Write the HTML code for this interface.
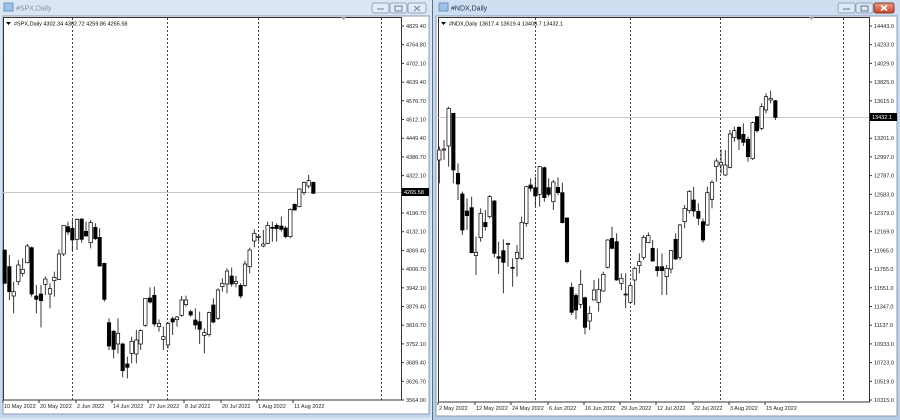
<!DOCTYPE html>
<html><head><meta charset="utf-8"><style>
body{margin:0;width:900px;height:420px;overflow:hidden;background:#dfe9f5;font-family:"Liberation Sans",sans-serif}
svg{display:block}
</style></head><body>
<svg width="900" height="420" viewBox="0 0 900 420" xmlns="http://www.w3.org/2000/svg" font-family="Liberation Sans, sans-serif">
<defs>
<linearGradient id="tb" x1="0" y1="0" x2="0" y2="1"><stop offset="0" stop-color="#dbe6f4"/><stop offset="1" stop-color="#c6d7ec"/></linearGradient>
<linearGradient id="tb2" x1="0" y1="0" x2="0" y2="1"><stop offset="0" stop-color="#cfdff2"/><stop offset="1" stop-color="#b7cde8"/></linearGradient>
<linearGradient id="rb" x1="0" y1="0" x2="0" y2="1"><stop offset="0" stop-color="#e8a08e"/><stop offset="1" stop-color="#c7442d"/></linearGradient>
</defs>
<rect x="0" y="0" width="431" height="418" fill="url(#tb)"/>
<rect x="3" y="16" width="426" height="398" fill="#fff" stroke="#8a9bb0" stroke-width="1"/>
<rect x="4" y="3" width="9" height="8" fill="#9fc1e6" stroke="#6c94c4"/>
<text x="16" y="10.5" font-size="7" fill="#7f93ad">#SPX,Daily</text>
<g fill="#e3ebf5" stroke="#8fa6c2"><rect x="372" y="3" width="17" height="10" rx="2"/><rect x="390" y="3" width="17" height="10" rx="2"/><rect x="408" y="3" width="18" height="10" rx="2"/></g>
<g stroke="#6b7f99" fill="none"><line x1="377" y1="9" x2="384" y2="9"/><rect x="395" y="6" width="7" height="5"/><path d="M414 6l6 5M420 6l-6 5"/></g>
<rect x="433" y="0" width="467" height="420" fill="url(#tb2)"/>
<line x1="432.5" y1="0" x2="432.5" y2="420" stroke="#5f6f80"/>
<rect x="436" y="16" width="461" height="400" fill="#fff" stroke="#8a9bb0"/>
<rect x="439" y="3" width="9" height="8" fill="#9fc1e6" stroke="#6c94c4"/>
<text x="451" y="10.5" font-size="7" fill="#1f2d3d">#NDX,Daily</text>
<g stroke="#8fa6c2" fill="#dde8f5"><rect x="838" y="3" width="17" height="10" rx="2"/><rect x="856" y="3" width="17" height="10" rx="2"/></g>
<rect x="874" y="3" width="20" height="10" rx="2" fill="url(#rb)" stroke="#8a3a2a"/>
<g stroke="#5e7290" fill="none"><line x1="843" y1="9" x2="850" y2="9"/><rect x="861" y="6" width="7" height="5"/></g>
<path d="M881 5.5l6 5M887 5.5l-6 5" stroke="#fff" stroke-width="1.5"/>
<g id="charts"></g>
</svg>
<script>
var NS="http://www.w3.org/2000/svg",g=document.getElementById('charts');
function el(t,a,txt){var e=document.createElementNS(NS,t);for(var k in a)e.setAttribute(k,a[k]);if(txt)e.textContent=txt;g.appendChild(e);return e;}
function chart(o){
 el('rect',{x:o.x0+.5,y:17.5,width:o.x1-o.x0,height:o.yb-17.5,fill:'none',stroke:'#333','stroke-width':1});
 o.vl.forEach(function(x){el('line',{x1:x+.5,y1:18,x2:x+.5,y2:o.yb,stroke:'#444','stroke-dasharray':'2,2','stroke-width':1});});
 el('line',{x1:o.x0,y1:o.cy+.5,x2:o.x1,y2:o.cy+.5,stroke:'#c8c8c8'});
 el('path',{d:'M'+(o.x1-60)+' 17l5 0l-2.5 3z',fill:'#999'});
 el('path',{d:'M'+(o.x0+3)+' 22l5 0l-2.5 3z',fill:'#000'});
 el('text',{x:o.x0+11,y:25.5,'font-size':5.5,fill:'#000'},o.title);
 o.labels.forEach(function(l,i){var y=26+i*18.7;if(l==null)return;
  el('line',{x1:o.x1,y1:y,x2:o.x1+3,y2:y,stroke:'#333'});
  el('text',{x:o.x1+5,y:y+2,'font-size':5.5,fill:'#222'},l);});
 el('rect',{x:o.x1+1,y:o.cy-4,width:27,height:8,fill:'#000'});
 el('text',{x:o.x1+3,y:o.cy+2,'font-size':5.5,fill:'#fff'},o.cur);
 o.dates.forEach(function(d){el('line',{x1:d[0]-1,y1:o.yb,x2:d[0]-1,y2:o.yb+3,stroke:'#333'});
  el('text',{x:d[0],y:o.yb+8,'font-size':5.5,fill:'#222'},d[1]);});
 o.c.forEach(function(c){var x=o.ox+c[0]/3,t=o.oy+c[1]/3,b=o.oy+c[2]/3,h=o.oy+c[3]/3,l=o.oy+c[4]/3;
  el('line',{x1:x,y1:h,x2:x,y2:l,stroke:'#222','stroke-width':.9});
  var hh=Math.max(b-t,1);
  el('rect',{x:x-1.7,y:t,width:3.4,height:hh,fill:c[5]?'#000':'#fff',stroke:'#000','stroke-width':.7});});
}
chart({x0:3,x1:401,yb:400,cy:192,title:'#SPX,Daily   4302.34 4302.72 4259.86 4265.58',cur:'4265.58',vl:[72,167,258,381],ox:0,oy:170,
labels:['4829.40','4764.80','4702.10','4639.40','4576.70','4512.10','4449.40','4386.70','4322.10',null,'4196.70','4132.10','4069.40','4006.70','3942.10','3879.40','3816.70','3752.10','3689.40','3626.70','3564.00'],
dates:[[4,'10 May 2022'],[40,'20 May 2022'],[77,'2 Jun 2022'],[113,'14 Jun 2022'],[149,'27 Jun 2022'],[185,'8 Jul 2022'],[222,'20 Jul 2022'],[258,'1 Aug 2022'],[294,'11 Aug 2022']],
c:[[14,240,340,240,340,1],[28,290,365,255,390,1],[41,365,378,335,430,0],[55,285,335,270,345,0],[68,298,310,265,320,0],[82,228,278,222,280,0],[95,233,372,230,380,1],[109,378,388,345,430,1],[123,372,392,345,472,1],[136,327,343,320,375,0],[150,356,372,340,415,0],[163,322,332,305,380,0],[177,252,328,238,330,0],[191,166,252,165,258,0],[204,170,186,155,195,1],[217,175,210,150,243,1],[231,148,208,145,240,0],[245,147,208,145,218,1],[258,184,198,155,200,1],[272,158,218,150,235,0],[286,172,206,160,210,1],[299,202,288,175,290,1],[313,280,388,278,395,1],[327,458,528,445,540,1],[341,484,538,480,565,1],[354,490,522,445,550,0],[368,522,602,518,622,1],[382,582,592,560,625,1],[395,514,550,500,580,0],[409,510,552,480,580,0],[422,482,522,478,540,0],[436,385,466,385,470,0],[450,384,396,352,400,1],[463,376,462,350,470,1],[477,460,470,448,485,0],[490,500,508,470,540,0],[504,460,525,455,535,0],[518,446,456,440,495,1],[531,441,449,438,470,0],[545,390,436,378,440,0],[558,390,404,377,410,0],[572,425,435,420,440,1],[586,450,465,415,478,1],[599,455,478,425,522,1],[613,488,496,475,550,0],[627,428,494,425,500,0],[640,405,456,385,460,1],[654,360,445,355,450,0],[667,340,350,325,365,0],[681,303,342,295,370,0],[695,318,342,293,350,1],[708,334,340,318,352,0],[722,346,378,340,385,1],[735,282,346,272,350,0],[749,240,290,233,310,0],[763,190,213,178,232,0],[776,199,200,192,215,0],[790,222,228,180,232,0],[803,166,220,155,222,0],[817,172,174,155,215,1],[830,166,176,160,215,1],[844,168,178,140,185,1],[857,174,200,168,205,1],[871,118,200,115,205,0],[884,103,120,100,122,1],[898,57,110,55,112,0],[912,38,68,35,75,0],[926,32,48,15,55,0],[940,37,70,35,72,1]]});
chart({x0:438,x1:869,yb:402,cy:117,title:'#NDX,Daily   13617.4 13619.4 13408.7 13432.1',cur:'13432.1',vl:[535,630,720,843],ox:430,oy:60,
labels:['14443.0','14233.0','14029.0','13825.0','13615.0',null,'13201.0','12997.0','12787.0','12583.0','12379.0','12169.0','11965.0','11755.0','11551.0','11347.0','11137.0','10933.0','10723.0','10519.0','10315.0'],
dates:[[439,'2 May 2022'],[476,'12 May 2022'],[512,'24 May 2022'],[549,'6 Jun 2022'],[585,'16 Jun 2022'],[621,'29 Jun 2022'],[657,'12 Jul 2022'],[694,'22 Jul 2022'],[730,'3 Aug 2022'],[766,'15 Aug 2022']],
c:[[28,270,300,260,370,0],[42,267,270,240,300,0],[56,145,258,140,320,0],[70,160,330,160,370,1],[84,340,372,310,420,1],[97,402,510,395,525,1],[111,453,467,415,510,1],[125,443,578,410,580,1],[138,577,587,530,645,0],[152,460,533,445,545,0],[166,487,500,450,512,1],[179,410,470,405,475,0],[193,423,580,420,592,1],[206,590,595,545,642,1],[220,572,607,538,700,1],[234,550,553,548,620,0],[248,622,625,595,680,1],[261,577,595,555,650,0],[275,487,595,470,600,0],[289,380,490,378,500,0],[302,375,385,355,395,1],[316,383,408,350,440,1],[329,320,403,318,440,0],[343,323,413,320,425,1],[356,383,403,355,410,1],[370,366,425,360,450,0],[384,382,398,352,405,1],[397,398,488,368,490,1],[411,474,605,472,610,1],[425,682,757,668,765,1],[438,706,750,700,778,1],[452,673,733,630,745,0],[465,713,802,710,823,1],[479,760,783,738,810,0],[492,690,720,660,720,0],[506,688,727,655,755,0],[520,643,693,635,695,0],[533,540,622,538,625,0],[546,535,565,500,568,1],[560,545,660,520,662,1],[574,655,670,640,690,0],[587,702,704,640,745,1],[601,677,727,672,730,0],[614,625,660,620,735,0],[628,605,617,580,640,0],[641,532,592,525,600,0],[655,527,548,517,550,0],[668,565,603,540,605,1],[682,620,632,565,650,1],[696,620,632,580,705,1],[710,625,650,615,705,0],[723,572,627,570,640,0],[737,538,597,520,600,1],[750,495,592,492,600,0],[764,445,485,435,505,0],[778,394,452,390,460,0],[791,420,453,380,470,1],[805,454,475,430,495,1],[819,485,540,475,548,1],[832,398,495,380,498,0],[846,367,418,360,445,0],[859,303,320,295,365,0],[873,307,315,268,340,0],[886,315,345,270,348,0],[900,222,322,210,325,0],[913,212,233,200,245,0],[927,202,237,198,270,1],[940,223,247,190,258,1],[954,238,290,230,305,1],[968,188,296,185,300,0],[981,170,212,168,218,1],[995,140,205,130,210,0],[1008,110,150,100,160,0],[1022,115,120,92,130,0],[1036,122,172,120,180,1]]});
</script>
</body></html>
